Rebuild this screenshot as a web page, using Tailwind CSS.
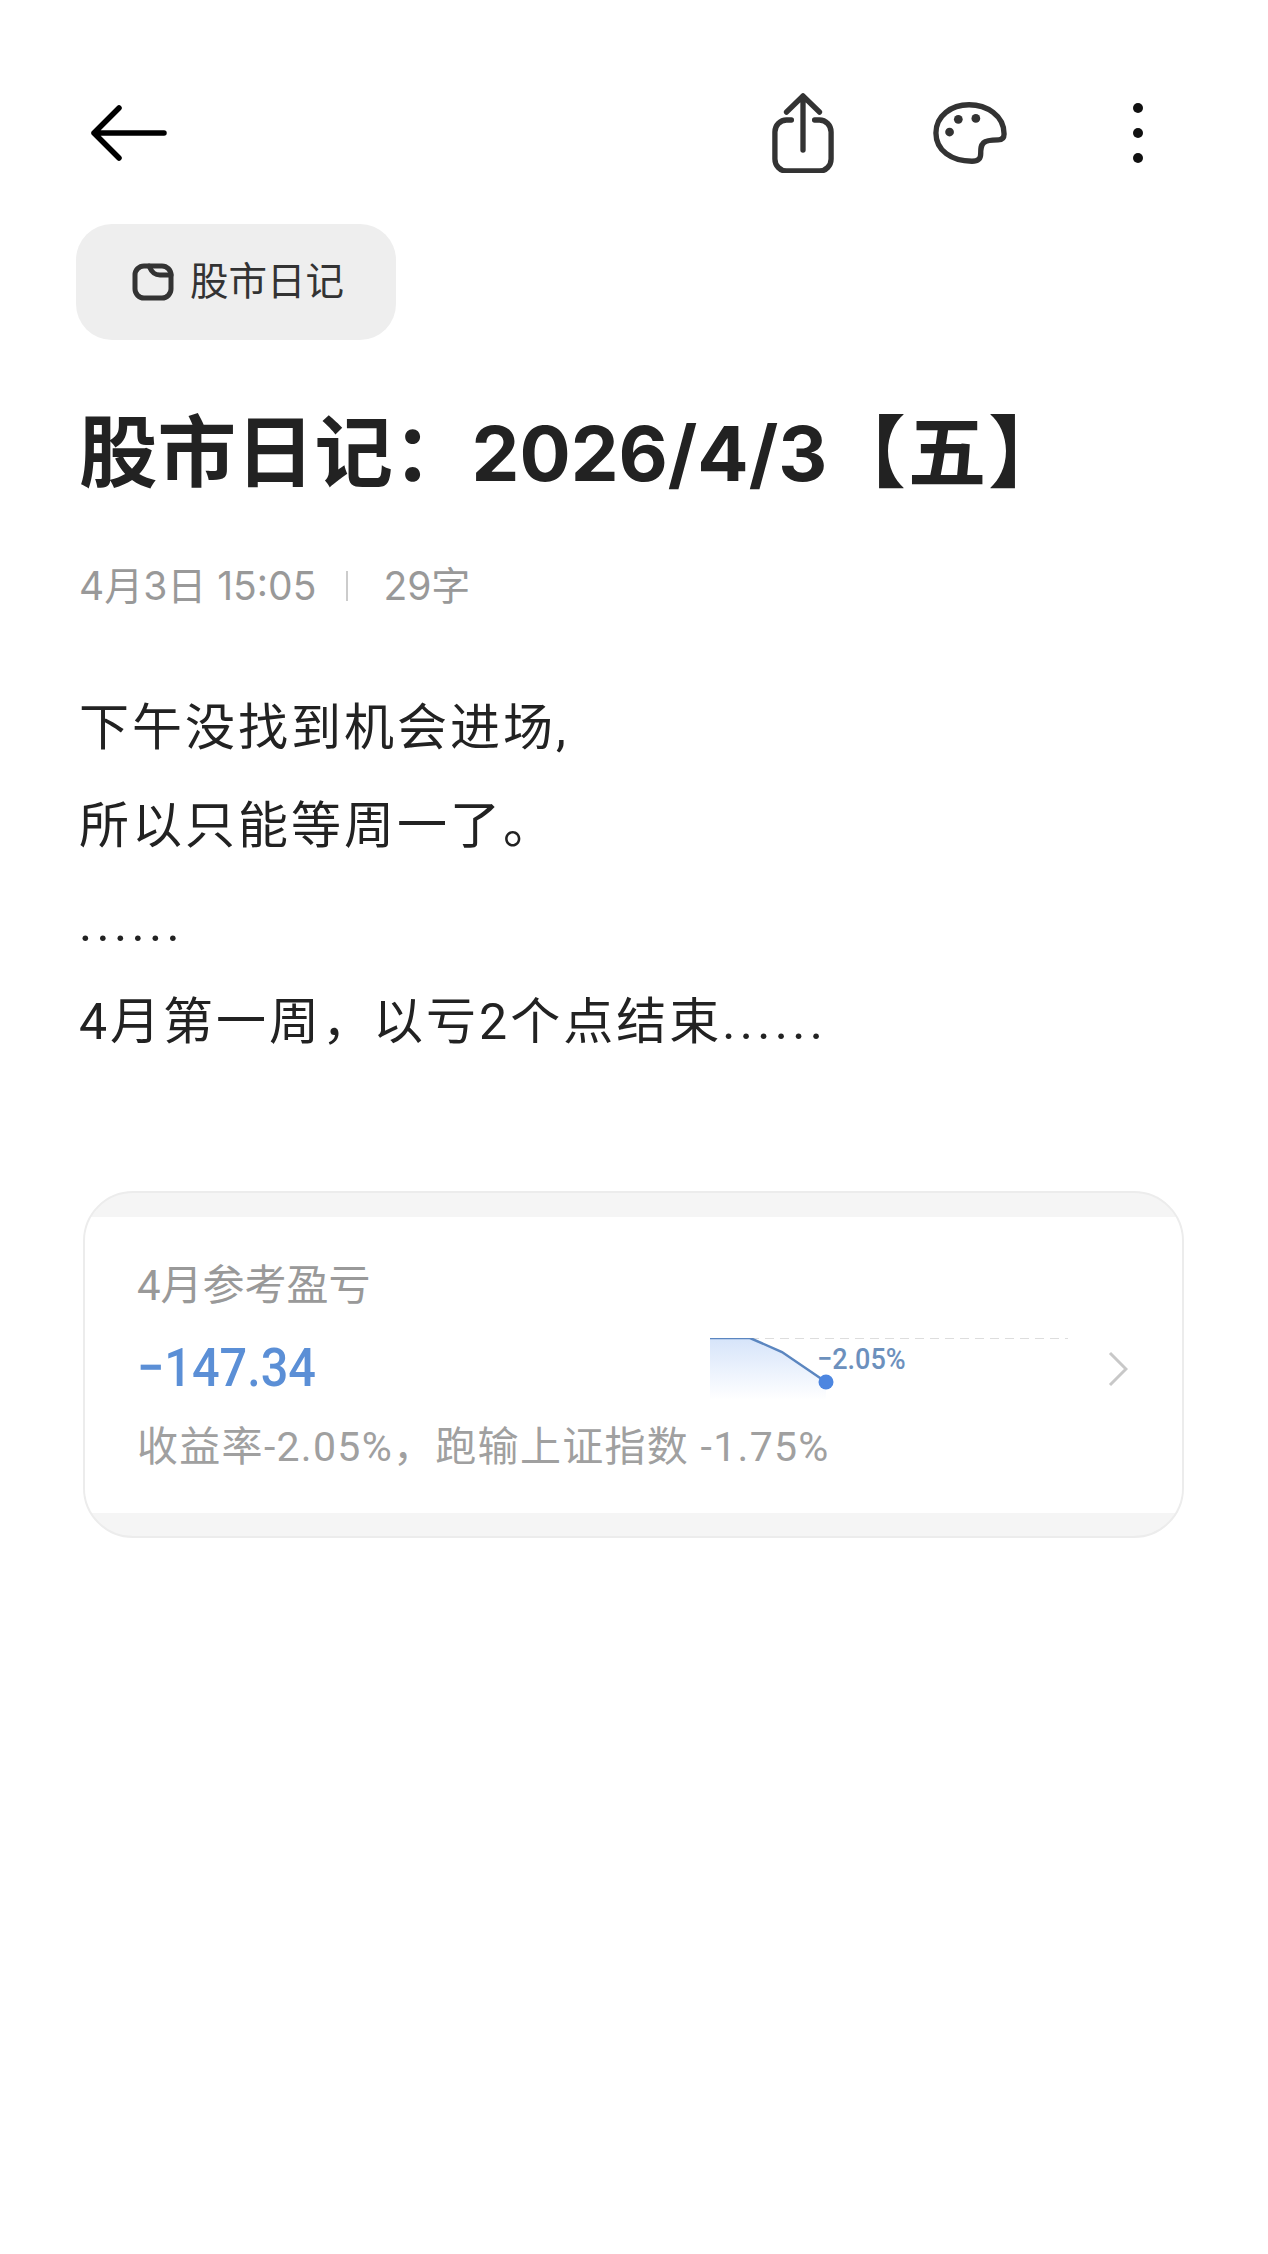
<!DOCTYPE html>
<html lang="zh-CN">
<head>
<meta charset="utf-8">
<script src="https://cdn.jsdelivr.net/npm/@tailwindcss/browser@4"></script>
</head>
<body class="bg-white font-['Inter','Noto_Sans_CJK_SC',sans-serif]">
<div class="w-[1268px] h-[2254px] bg-white overflow-hidden">
  <header class="flex items-center h-[80px] mt-[93px] pl-[91px] pr-[125px]">
    <svg class="w-[76px] h-[56px]" viewBox="0 0 76 56" fill="none" stroke="#000" stroke-width="5.5" stroke-linecap="round" stroke-linejoin="round"><path d="M28 3 3 28l25 25M3 28h70"/></svg>
    <svg class="ml-auto w-[62px] h-[80px]" viewBox="0 0 64 80" fill="none" stroke="#333" stroke-width="5.5" stroke-linecap="round" stroke-linejoin="round" preserveAspectRatio="none"><path d="M20 27h-5A12 12 0 0 0 3 39v27a12 12 0 0 0 12 12h34a12 12 0 0 0 12-12V39a12 12 0 0 0-12-12h-5M32 57V3M15 19 32 3l17 16"/></svg>
    <svg class="ml-[99px] w-[74px] h-[64px]" viewBox="0 0 76 64" fill="none" stroke="#333" stroke-width="5.5" stroke-linecap="round" stroke-linejoin="round"><path d="M3 32C3 14 19 3 37 3c18 0 36 11 36 30 0 4-2 6-6 6-5 0-12 0-15 3-3 3-3 6-3 11 0 5-2 8-9 8C19 61 3 50 3 32Z"/><circle cx="17" cy="31" r="4.5" fill="#333" stroke="none"/><circle cx="26" cy="18" r="4.5" fill="#333" stroke="none"/><circle cx="44" cy="17" r="4.5" fill="#333" stroke="none"/></svg>
    <div class="ml-[126px] flex flex-col gap-[15px]">
      <span class="block w-[10px] h-[10px] rounded-full bg-[#111]"></span>
      <span class="block w-[10px] h-[10px] rounded-full bg-[#111]"></span>
      <span class="block w-[10px] h-[10px] rounded-full bg-[#111]"></span>
    </div>
  </header>

  <main class="pl-[79px]">
    <div class="-ml-[3px] mt-[51px] w-[320px] h-[116px] rounded-[36px] bg-[#eeeeee] flex items-center pl-[56px] gap-[16px]">
      <svg class="w-[42px] h-[38px]" viewBox="0 0 42 38" fill="none" stroke="#333" stroke-width="5" stroke-linecap="round" stroke-linejoin="round"><rect x="3" y="3" width="36" height="32" rx="9"/><path d="M17 3c3 7 6 9 11 9h11"/></svg>
      <span class="text-[38.5px] leading-none text-[#333333] -mt-[1px]">股市日记</span>
    </div>

    <h1 class="mt-[63px] text-[78.5px] leading-[100px] font-bold text-[#222222] whitespace-nowrap">股市日记&#xFF1A;<span class="text-[76px]">2026/4/3</span><span class="tracking-[2px]">【五】</span></h1>

    <div class="mt-[61px] flex items-center h-[44px] text-[39px] text-[#999999] whitespace-nowrap">
      <span>4月3日 15:05</span>
      <span class="ml-[30px] w-[2px] h-[30px] bg-[#cccccc]"></span>
      <span class="ml-[35px]">29字</span>
    </div>

    <div class="mt-[71px] text-[50px] leading-[98px] text-[#222222] whitespace-nowrap tracking-[3px] font-['Roboto','Noto_Sans_CJK_SC',sans-serif]">
      <p>下午没找到机会进场,</p>
      <p>所以只能等周一了。</p>
      <p class="tracking-[4.3px]">......</p>
      <p>4月第一周<span class="tracking-[1px]">&#xFF0C;</span>以亏2个点结束<span class="tracking-[4.3px]">......</span></p>
    </div>
  </main>

  <section class="ml-[83px] mt-[120px] w-[1101px] h-[347px] rounded-[50px] border-2 border-[#ececec] bg-[#f5f5f5] overflow-hidden flex flex-col">
    <div class="mt-[24px] h-[296px] bg-white pl-[52px] pr-[54px] pt-[44px] font-['Roboto','Noto_Sans_CJK_SC',sans-serif]">
      <div class="text-[42px] leading-[50px] text-[#999999] whitespace-nowrap">4月参考盈亏</div>
      <div class="flex items-center h-[74px] mt-[20px]">
        <div class="w-[574px] text-[54px] leading-none font-medium text-[#5b8fd6] whitespace-nowrap"><span class="inline-block origin-left scale-x-90">−147.34</span></div>
        <div class="relative w-[362px] h-[74px] mt-[14px] ml-[1px]">
          <svg class="w-[362px] h-[74px]" viewBox="0 0 362 74" fill="none">
            <defs><linearGradient id="g" x1="0" y1="0" x2="0" y2="1"><stop offset="0" stop-color="#d6e4fa"/><stop offset="1" stop-color="#ffffff"/></linearGradient></defs>
            <path d="M0 0H40L72 14 116 44V62H0Z" fill="url(#g)"/>
            <path d="M40 0H358" stroke="#dddddd" stroke-width="2" stroke-dasharray="9 6"/>
            <path d="M0 0H40L72 14 116 44" stroke="#5b86c0" stroke-width="2.5"/>
            <circle cx="116" cy="44" r="7.5" fill="#4d86e0"/>
          </svg>
          <span class="absolute left-[107px] top-[6px] text-[30px] leading-[30px] font-medium text-[#6c90bd] whitespace-nowrap inline-block origin-left scale-x-90">−2.05%</span>
        </div>
        <svg class="ml-[36px] mt-[1px] w-[20px] h-[36px]" viewBox="0 0 20 36" fill="none" stroke="#c8c8c8" stroke-width="3"><path d="M2 2l16 16L2 34"/></svg>
      </div>
      <div class="text-[41px] leading-[50px] text-[#a0a0a0] whitespace-nowrap mt-[17px] tracking-[1.3px]">收益率-2.05%&#xFF0C;跑输上证指数 -1.75%</div>
    </div>
  </section>
</div>
</body>
</html>
